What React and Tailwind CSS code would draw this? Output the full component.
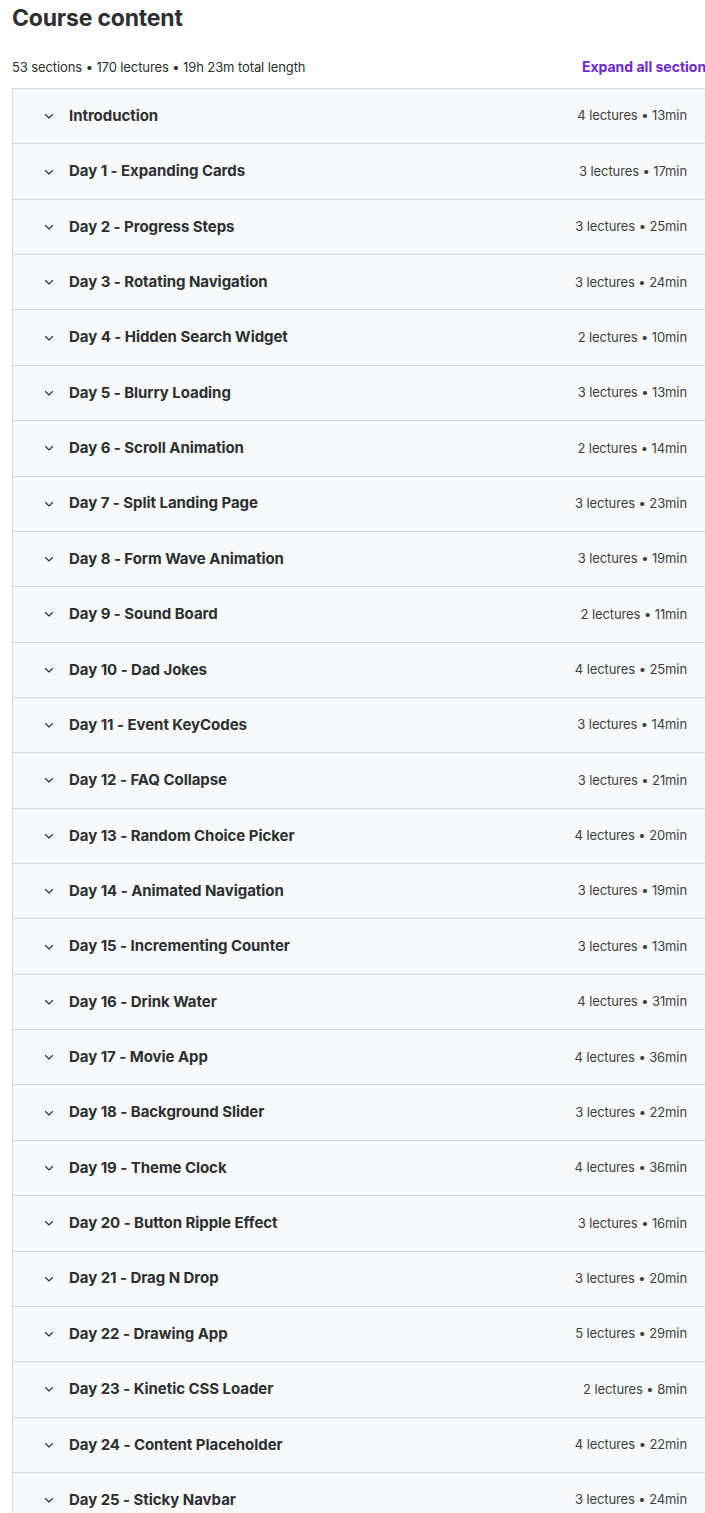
import React from "react";

const sections = [
  ["Introduction", 4, 13],
  ["Day 1 - Expanding Cards", 3, 17],
  ["Day 2 - Progress Steps", 3, 25],
  ["Day 3 - Rotating Navigation", 3, 24],
  ["Day 4 - Hidden Search Widget", 2, 10],
  ["Day 5 - Blurry Loading", 3, 13],
  ["Day 6 - Scroll Animation", 2, 14],
  ["Day 7 - Split Landing Page", 3, 23],
  ["Day 8 - Form Wave Animation", 3, 19],
  ["Day 9 - Sound Board", 2, 11],
  ["Day 10 - Dad Jokes", 4, 25],
  ["Day 11 - Event KeyCodes", 3, 14],
  ["Day 12 - FAQ Collapse", 3, 21],
  ["Day 13 - Random Choice Picker", 4, 20],
  ["Day 14 - Animated Navigation", 3, 19],
  ["Day 15 - Incrementing Counter", 3, 13],
  ["Day 16 - Drink Water", 4, 31],
  ["Day 17 - Movie App", 4, 36],
  ["Day 18 - Background Slider", 3, 22],
  ["Day 19 - Theme Clock", 4, 36],
  ["Day 20 - Button Ripple Effect", 3, 16],
  ["Day 21 - Drag N Drop", 3, 20],
  ["Day 22 - Drawing App", 5, 29],
  ["Day 23 - Kinetic CSS Loader", 2, 8],
  ["Day 24 - Content Placeholder", 4, 22],
  ["Day 25 - Sticky Navbar", 3, 24],
];

const Chevron = () => (
  <svg width="12" height="12" viewBox="0 0 24 24" fill="none" stroke="#2d2f31" strokeWidth="2.2" strokeLinecap="round" strokeLinejoin="round">
    <path d="M5 9l7 7 7-7" />
  </svg>
);

export default function App() {
  return (
    <div className="w-[705px] h-[1513px] overflow-hidden bg-white" style={{ fontFamily: "Inter, 'Noto Sans', sans-serif" }}>
      <div className="w-[714px] pl-3">
        <h2 className="text-[23px] leading-[36px] font-bold text-[#2d2f31] tracking-[-0.2px]">Course content</h2>
        <div className="flex items-center justify-between mt-[15px] h-[34px]">
          <span className="text-[13px] text-[#2d2f31] tracking-[-0.1px]">53 sections • 170 lectures • 19h 23m total length</span>
          <span className="text-[14px] font-bold text-[#6d28d2] whitespace-nowrap -mt-[3px]">Expand all sections</span>
        </div>
        <div className="border-l border-[#d1d7dc] mt-[3px] w-[699px]">
          {sections.map(([title, n, min]) => (
            <div key={title} className="h-[55.36px] border-t border-[#d1d7dc] bg-[#f7f9fa] flex items-center pl-[30px] pr-6">
              <Chevron />
              <span className="ml-[14px] text-[15px] font-bold text-[#2d2f31] tracking-[-0.05px]">{title}</span>
              <span className="ml-auto text-[13px] text-[#3e4143] tracking-[-0.1px]">{n} lectures • {min}min</span>
            </div>
          ))}
        </div>
      </div>
    </div>
  );
}
